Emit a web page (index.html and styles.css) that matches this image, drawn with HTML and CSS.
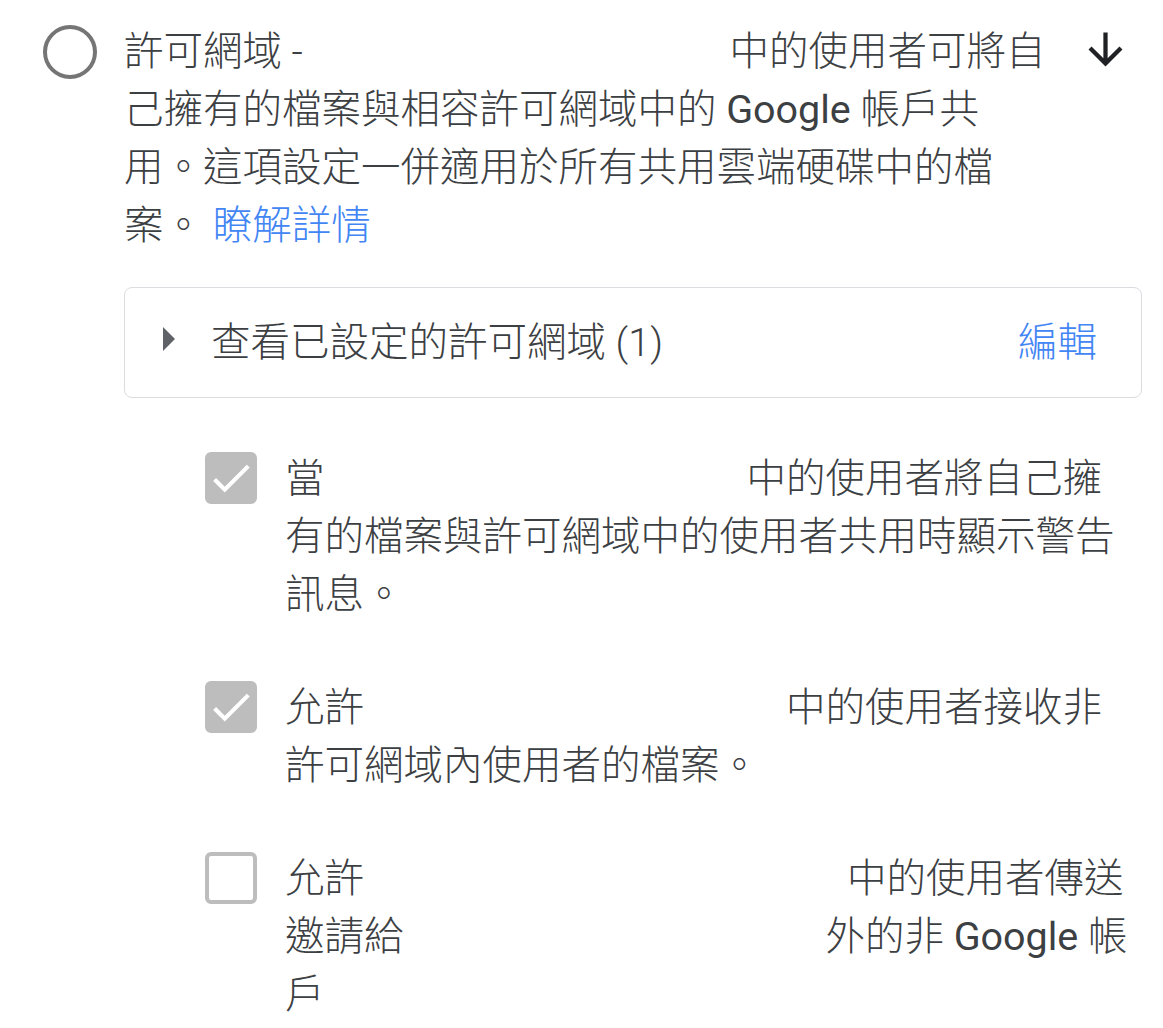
FILE: index.html
```html
<!DOCTYPE html>
<html lang="zh-Hant">
<head>
    <meta charset="UTF-8">
    <meta name="viewport" content="width=device-width, initial-scale=1.0">
    <title>共用設定</title>
    <link rel="stylesheet" href="styles.css">
</head>
<body>
    <div class="setting">
        <span class="radio"></span>

        <div class="setting-body">
            <div class="setting-head">
                <p class="desc">許可網域 - <span class="org org-title"></span>中的使用者可將自己擁有的檔案與相容許可網域中的 <span class="brand">Google</span> 帳戶共用。這項設定一併適用於所有共用雲端硬碟中的檔案。 <a href="#" class="link">瞭解詳情</a></p>
                <button class="icon-btn" aria-label="展開">
                    <svg viewBox="0 0 24 24" width="51" height="51"><path d="M20 12l-1.41-1.41L13 16.17V4h-2v12.17l-5.58-5.59L4 12l8 8 8-8z"/></svg>
                </button>
            </div>

            <div class="domains">
                <svg class="caret" viewBox="0 0 12 24" width="12" height="24"><path d="M0 0L12 12L0 24z"/></svg>
                <span class="domains-label">查看已設定的許可網域 (1)</span>
                <a href="#" class="link">編輯</a>
            </div>

            <ul class="checks">
                <li class="check-item">
                    <span class="checkbox checked">
                        <svg viewBox="0 0 24 24" width="50" height="50"><path d="M9 16.17L4.83 12l-1.42 1.41L9 19 21 7l-1.41-1.41z"/></svg>
                    </span>
                    <span class="check-label">當<span class="org"></span>中的使用者將自己擁有的檔案與許可網域中的使用者共用時顯示警告訊息。</span>
                </li>
                <li class="check-item">
                    <span class="checkbox checked">
                        <svg viewBox="0 0 24 24" width="50" height="50"><path d="M9 16.17L4.83 12l-1.42 1.41L9 19 21 7l-1.41-1.41z"/></svg>
                    </span>
                    <span class="check-label">允許<span class="org"></span>中的使用者接收非許可網域內使用者的檔案。</span>
                </li>
                <li class="check-item">
                    <span class="checkbox"></span>
                    <span class="check-label">允許<span class="org org-wide"></span>中的使用者傳送邀請給<span class="org"></span>外的非 <span class="brand">Google</span> 帳戶</span>
                </li>
            </ul>
        </div>
    </div>
</body>
</html>
```

FILE: styles.css
```css
* {
    margin: 0;
    padding: 0;
    box-sizing: border-box;
}

body {
    background: #fff;
    color: #3c4043;
    font-family: Roboto, "Noto Sans CJK TC", sans-serif;
    font-size: 39.5px;
    font-weight: 300;
    line-height: 58px;
    padding-top: 23px;
}

.setting {
    display: flex;
    gap: 27px;
    padding: 0 21px 0 43px;
}

.radio {
    flex: none;
    width: 54px;
    height: 54px;
    margin-top: 2px;
    border: 4px solid #757575;
    border-radius: 50%;
}

.setting-body {
    flex: 1;
}

.setting-head {
    display: flex;
    justify-content: space-between;
    align-items: flex-start;
}

.desc {
    width: 922px;
}

.org {
    display: inline-block;
    width: 422px;
    height: 1px;
}

.org-title {
    width: 417px;
}

.org-wide {
    width: 483px;
}

.brand {
    font-weight: 400;
}

.link {
    color: #4285f4;
    text-decoration: none;
}

.icon-btn {
    display: flex;
    margin: 1px 11px 0 0;
    border: none;
    background: none;
    fill: #202124;
    cursor: pointer;
}

.domains {
    display: flex;
    align-items: center;
    margin-top: 32px;
    padding: 26px 44px 25px 38px;
    border: 1px solid #dadce0;
    border-radius: 8px;
}

.caret {
    flex: none;
    fill: #5f6368;
    margin: -8px 36px 0 0;
}

.domains-label {
    flex: 1;
}

.checks {
    list-style: none;
    margin: 52px 6px 0 81px;
}

.check-item {
    display: flex;
    gap: 28px;
}

.check-item + .check-item {
    margin-top: 55px;
}

.checkbox {
    flex: none;
    display: flex;
    align-items: center;
    justify-content: center;
    width: 52px;
    height: 52px;
    margin-top: 2px;
    border: 4px solid #bdbdbd;
    border-radius: 6px;
}

.checkbox svg {
    flex: none;
}

.checkbox.checked {
    background: #bdbdbd;
    fill: #fff;
}

.check-label {
    flex: 1;
}
```
